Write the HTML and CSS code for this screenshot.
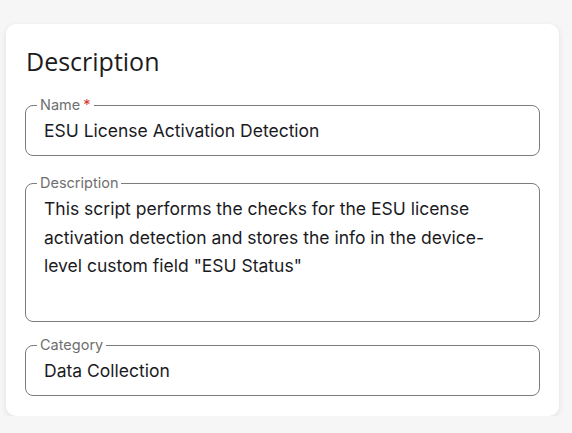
FILE: index.html
```html
<!DOCTYPE html>
<html lang="en">
<head>
<meta charset="utf-8">
<title>Description</title>
<link rel="stylesheet" href="styles.css">
</head>
<body>
<div class="page">
  <section class="card">
    <h2 class="card-title">Description</h2>
    <fieldset class="field">
      <legend class="field-label">Name<span class="required">*</span></legend>
      <div class="field-value">ESU License Activation Detection</div>
    </fieldset>
    <fieldset class="field field-multiline">
      <legend class="field-label">Description</legend>
      <div class="field-value field-text">This script performs the checks for the ESU license activation detection and stores the info in the device-level custom field "ESU Status"</div>
    </fieldset>
    <fieldset class="field field-last">
      <legend class="field-label">Category</legend>
      <div class="field-value">Data Collection</div>
    </fieldset>
  </section>
</div>
</body>
</html>
```

FILE: styles.css
```css
html, body {
  margin: 0;
  padding: 0;
}

body {
  background: #f6f6f6;
  font-family: Inter, "Noto Sans", sans-serif;
  color: #1b1b1f;
}

.page {
  padding: 24px 13px 0 6px;
}

.card {
  background: #ffffff;
  border-radius: 10px;
  padding: 21px 19px 20px;
  box-shadow: 0 2px 6px rgba(0, 0, 0, 0.09);
}

.card-title {
  margin: 0 0 20px 0;
  padding-left: 1px;
  font-family: "Open Sans", "Noto Sans", sans-serif;
  font-size: 25px;
  line-height: 32px;
  font-weight: 400;
  color: #1c1c1c;
}

.field {
  margin: 0;
  padding: 5px 18px 12px;
  border: 1px solid #7c7c7c;
  border-radius: 8px;
  min-width: 0;
}

.field + .field {
  margin-top: 19px;
}

.field-last {
  margin-top: 15px !important;
}

.field-label {
  margin-left: -7px;
  padding: 0 3px;
  font-size: 14.5px;
  line-height: 16px;
  color: #6f6f6f;
}

.required {
  color: #d33b2c;
  margin-left: 3px;
}

.field-value {
  font-size: 17.5px;
  line-height: 25px;
  color: #1b1b1f;
}

.field-multiline {
  padding-top: 4px;
  padding-bottom: 0;
}

.field-text {
  line-height: 28.5px;
  height: 126px;
  padding-right: 10px;
}
```
